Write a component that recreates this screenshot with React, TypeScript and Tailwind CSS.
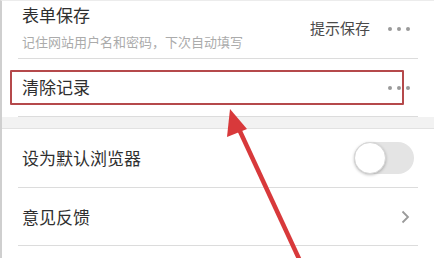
import React from "react";

const font = { fontFamily: '"Noto Sans CJK SC", "Noto Sans", sans-serif' };

function Dots() {
  return (
    <div className="flex items-center gap-[5px]">
      <span className="w-[4px] h-[4px] rounded-full bg-[#9a9a9a]" />
      <span className="w-[4px] h-[4px] rounded-full bg-[#9a9a9a]" />
      <span className="w-[4px] h-[4px] rounded-full bg-[#9a9a9a]" />
    </div>
  );
}

function Divider() {
  return <div className="ml-[16px] mr-[16px] h-px bg-[#dcdcdc]" />;
}

export default function App() {
  return (
    <div
      className="relative w-[434px] h-[258px] overflow-hidden bg-white border-l-2 border-l-[#cfcfcf] border-t border-t-[#ececec]"
      style={font}
    >
      {/* Row 1 */}
      <div className="h-[57px] flex items-center pl-[20px] pr-[24px]">
        <div className="flex-1 flex flex-col -mt-[4px]">
          <span className="text-[17px] leading-[22px] text-[#2f2f2f]">表单保存</span>
          <span className="text-[13px] leading-[18px] mt-[7px] text-[#ababab]">
            记住网站用户名和密码，下次自动填写
          </span>
        </div>
        <span className="text-[15px] text-[#4a4a4a] mr-[18px] -mt-[2px]">提示保存</span>
        <div className="-mt-[2px]">
          <Dots />
        </div>
      </div>
      <Divider />
      {/* Row 2 */}
      <div className="h-[57px] flex items-center pl-[20px] pr-[24px]">
        <span className="flex-1 text-[17px] text-[#2f2f2f] -mt-[2px]">清除记录</span>
        <Dots />
      </div>
      <Divider />
      {/* section gap */}
      <div className="h-[12px] bg-[#f2f2f2] border-b border-b-[#e2e2e2]" />
      {/* Row 3 */}
      <div className="h-[58px] flex items-center pl-[20px] pr-[20px]">
        <span className="flex-1 text-[17px] text-[#2f2f2f]">设为默认浏览器</span>
        <div className="relative w-[60px] h-[32px] rounded-full bg-[#e4e4e4]">
          <div className="absolute left-0 top-0 w-[32px] h-[32px] rounded-full bg-white border border-[#d6d6d6] shadow-[0_1px_3px_rgba(0,0,0,0.25)]" />
        </div>
      </div>
      <Divider />
      {/* Row 4 */}
      <div className="h-[57px] flex items-center pl-[20px] pr-[24px]">
        <span className="flex-1 text-[17px] text-[#2f2f2f]">意见反馈</span>
        <svg width="9" height="14" viewBox="0 0 9 14">
          <path d="M1.5 1.5 L7 7 L1.5 12.5" fill="none" stroke="#9a9a9a" strokeWidth="1.8" />
        </svg>
      </div>
      <Divider />

      {/* red highlight box */}
      <div className="absolute left-[8px] top-[69px] w-[394px] h-[35px] border-2 border-[#b5494b] rounded-[1px]" />

      {/* arrow */}
      <svg className="absolute left-0 top-0" width="434" height="258" viewBox="0 0 434 258">
        <line x1="236" y1="126" x2="299" y2="262" stroke="#d8393b" strokeWidth="4.5" />
        <polygon points="228,108 245,128 225,136" fill="#d8393b" />
      </svg>
    </div>
  );
}
